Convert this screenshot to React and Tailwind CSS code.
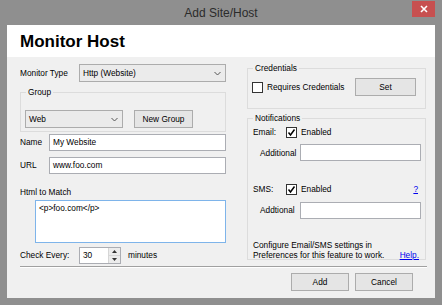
import React from 'react'

const Chevron = () => (
  <svg width="7" height="5" viewBox="0 0 7 5" className="shrink-0">
    <polyline points="0.5,1 3.5,4 6.5,1" fill="none" stroke="#555" strokeWidth="1" />
  </svg>
)

function Select({ value, className }) {
  return (
    <div className={`h-[18px] border border-[#acacac] bg-[#ebebeb] flex items-center justify-between pl-[3px] pr-[4px] ${className}`}>
      <span>{value}</span>
      <Chevron />
    </div>
  )
}

function TextBox({ value, className }) {
  return (
    <div className={`h-[17px] border border-[#abadb3] bg-white flex items-center px-[3px] ${className}`}>
      {value}
    </div>
  )
}

function Button({ children, className }) {
  return (
    <div className={`h-[18px] border border-[#acacac] bg-[#e5e5e5] flex items-center justify-center ${className}`}>
      {children}
    </div>
  )
}

function CheckBox({ checked }) {
  return (
    <div className="w-[11px] h-[11px] border border-[#333] bg-white flex items-center justify-center shrink-0">
      {checked && (
        <svg width="9" height="9" viewBox="0 0 9 9">
          <polyline points="1.5,4.5 3.5,7 7.5,1.5" fill="none" stroke="#000" strokeWidth="1.5" />
        </svg>
      )}
    </div>
  )
}

function GroupBox({ title, className, children }) {
  return (
    <div className={`relative border border-[#dcdcdc] ${className}`}>
      <span className="absolute left-[5px] top-[-6px] bg-[#f0f0f0] px-[2px] leading-[11px]">{title}</span>
      {children}
    </div>
  )
}

export default function App() {
  return (
    <div className="w-[442px] h-[305px] bg-[#8f8f8f] flex flex-col font-['Liberation_Sans',Arial,sans-serif] text-[8.3px] text-black">
      {/* Title bar */}
      <div className="h-[25px] relative flex justify-center pt-[4px] text-[12px] text-[#2b2b2b]">
        Add Site/Host
        <div className="absolute right-[7px] top-[1px] w-[23px] h-[16px] bg-[#c75050] flex items-center justify-center">
          <svg width="8" height="8" viewBox="0 0 8 8">
            <path d="M1 1L7 7M7 1L1 7" stroke="#fff" strokeWidth="1.6" />
          </svg>
        </div>
      </div>

      <div className="mx-[7px] flex-1 flex flex-col">
        {/* Header */}
        <div className="h-[32px] bg-white pl-[13px] pt-[1px] flex items-center text-[17px] font-bold">
          Monitor Host
        </div>

        {/* Body */}
        <div className="flex-1 bg-[#f0f0f0] flex flex-col">
          <div className="h-[209px] flex pl-[13px] gap-[21px]">
            {/* Left column */}
            <div className="w-[206px] flex flex-col pt-[7px]">
              <div className="flex items-center">
                <span className="w-[59px]">Monitor Type</span>
                <Select value="Http (Website)" className="w-[147px]" />
              </div>

              <GroupBox title="Group" className="mt-[10px] h-[40px] pl-[4px] pt-[17px]">
                <div className="flex items-center">
                  <Select value="Web" className="w-[98px] h-[17px]" />
                  <Button className="ml-[11px] w-[59px]">New Group</Button>
                </div>
              </GroupBox>

              <div className="flex items-center mt-[2px]">
                <span className="w-[29px]">Name</span>
                <TextBox value="My Website" className="flex-1" />
              </div>
              <div className="flex items-center mt-[6px]">
                <span className="w-[29px]">URL</span>
                <TextBox value="www.foo.com" className="flex-1" />
              </div>

              <div className="mt-[13px] leading-[11px]">Html to Match</div>
              <div className="ml-[15px] mt-[2px] h-[43px] border border-[#7eb4ea] bg-white px-[3px] pt-[2px] leading-[11px]">
                {'<p>foo.com</p>'}
              </div>

              <div className="flex items-center mt-[4px]">
                <span className="w-[59px]">Check Every:</span>
                <div className="w-[42px] h-[17px] border border-[#abadb3] bg-white flex">
                  <span className="flex-1 pl-[3px] flex items-center">30</span>
                  <div className="w-[12px] flex flex-col border-l border-[#d6d6d6]">
                    <div className="flex-1 bg-[#ececec] border-b border-[#d6d6d6] flex items-center justify-center">
                      <svg width="5" height="3" viewBox="0 0 5 3"><polygon points="0,3 2.5,0 5,3" fill="#333" /></svg>
                    </div>
                    <div className="flex-1 bg-[#ececec] flex items-center justify-center">
                      <svg width="5" height="3" viewBox="0 0 5 3"><polygon points="0,0 2.5,3 5,0" fill="#333" /></svg>
                    </div>
                  </div>
                </div>
                <span className="ml-[7px]">minutes</span>
              </div>
            </div>

            {/* Right column */}
            <div className="w-[179px] flex flex-col pt-[11px]">
              <GroupBox title="Credentials" className="h-[41px] pl-[4px] pt-[9px]">
                <div className="flex items-center">
                  <CheckBox />
                  <span className="ml-[4px]">Requires Credentials</span>
                  <Button className="ml-auto mr-[9px] w-[61px]">Set</Button>
                </div>
              </GroupBox>

              <GroupBox title="Notifications" className="mt-[9px] h-[142px] pl-[5px] pt-[7px] pr-[4px]">
                <div className="flex items-center">
                  <span className="w-[33px]">Email:</span>
                  <CheckBox checked />
                  <span className="ml-[4px]">Enabled</span>
                </div>
                <div className="flex items-center mt-[6px] pl-[7px]">
                  <span className="w-[40px]">Additional</span>
                  <TextBox value="" className="w-[121px]" />
                </div>
                <div className="flex items-center mt-[22px]">
                  <span className="w-[33px]">SMS:</span>
                  <CheckBox checked />
                  <span className="ml-[4px]">Enabled</span>
                  <span className="ml-auto mr-[3px] text-[#0000ee] underline">?</span>
                </div>
                <div className="flex items-center mt-[6px] pl-[7px]">
                  <span className="w-[40px]">Addtional</span>
                  <TextBox value="" className="w-[121px]" />
                </div>
                <div className="mt-[21px] leading-[10px]">
                  <div>Configure Email/SMS settings in</div>
                  <div className="flex">
                    <span>Preferences for this feature to work.</span>
                    <span className="ml-auto mr-[2px] text-[#0000ee] underline">Help.</span>
                  </div>
                </div>
              </GroupBox>
            </div>
          </div>

          {/* Separator */}
          <div className="ml-[13px] mr-[8px] h-[2px] bg-[#a0a0a0] border-b border-white" />

          {/* Buttons */}
          <div className="flex justify-end gap-[6px] pr-[22px] mt-[5px]">
            <Button className="w-[58px]">Add</Button>
            <Button className="w-[58px]">Cancel</Button>
          </div>
        </div>
      </div>
      <div className="h-[7px]" />
    </div>
  )
}
